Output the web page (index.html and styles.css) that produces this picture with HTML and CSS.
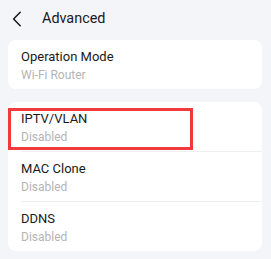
FILE: index.html
```html
<!DOCTYPE html>
<html>
<head>
<meta charset="utf-8">
<link rel="stylesheet" href="styles.css">
</head>
<body>
<div class="page">
  <header class="topbar">
    <svg class="back" width="10" height="16" viewBox="0 0 10 16"><path d="M8.2 1.2 L1.6 8 L8.2 14.8" fill="none" stroke="#1a1a1a" stroke-width="1.5" stroke-linecap="round" stroke-linejoin="round"/></svg>
    <h1 class="title">Advanced</h1>
  </header>
  <section class="card">
    <div class="row">
      <div class="row-title">Operation Mode</div>
      <div class="row-sub">Wi-Fi Router</div>
    </div>
  </section>
  <section class="card card-second">
    <div class="row">
      <div class="row-title">IPTV/VLAN</div>
      <div class="row-sub">Disabled</div>
    </div>
    <div class="row divided">
      <div class="row-title">MAC Clone</div>
      <div class="row-sub">Disabled</div>
    </div>
    <div class="row divided">
      <div class="row-title">DDNS</div>
      <div class="row-sub">Disabled</div>
    </div>
    <div class="highlight"></div>
  </section>
</div>
</body>
</html>
```
FILE: styles.css
```css
html, body {
  margin: 0;
  padding: 0;
  background: #f4f5f9;
}
body {
  font-family: Roboto, "Liberation Sans", sans-serif;
  color: #1a1a1a;
}
.page {
  padding: 0 9px 0 8px;
}
.topbar {
  height: 40px;
  display: flex;
  align-items: center;
}
.back {
  display: block;
  margin-left: 4px;
  margin-top: -2px;
}
.title {
  margin: -3px 0 0 20px;
  font-size: 14.4px;
  font-weight: 400;
  line-height: 18px;
}
.card {
  background: #ffffff;
  border-radius: 8px;
}
.card-second {
  margin-top: 13px;
  position: relative;
}
.row {
  height: 49px;
  box-sizing: border-box;
  padding: 9px 13px 6px;
}
.row.divided {
  margin-left: 13px;
  padding-left: 0;
  border-top: 1px solid #eeeff1;
  height: 50px;
}
.row-title {
  font-size: 13px;
  line-height: 16px;
  color: #1a1a1a;
}
.row-sub {
  margin-top: 2px;
  font-size: 12px;
  line-height: 16px;
  color: #b4b4b6;
}
.highlight {
  position: absolute;
  left: 0;
  top: 6px;
  width: 185px;
  height: 42px;
  box-sizing: border-box;
  border: 3px solid #f03a3c;
}
```
